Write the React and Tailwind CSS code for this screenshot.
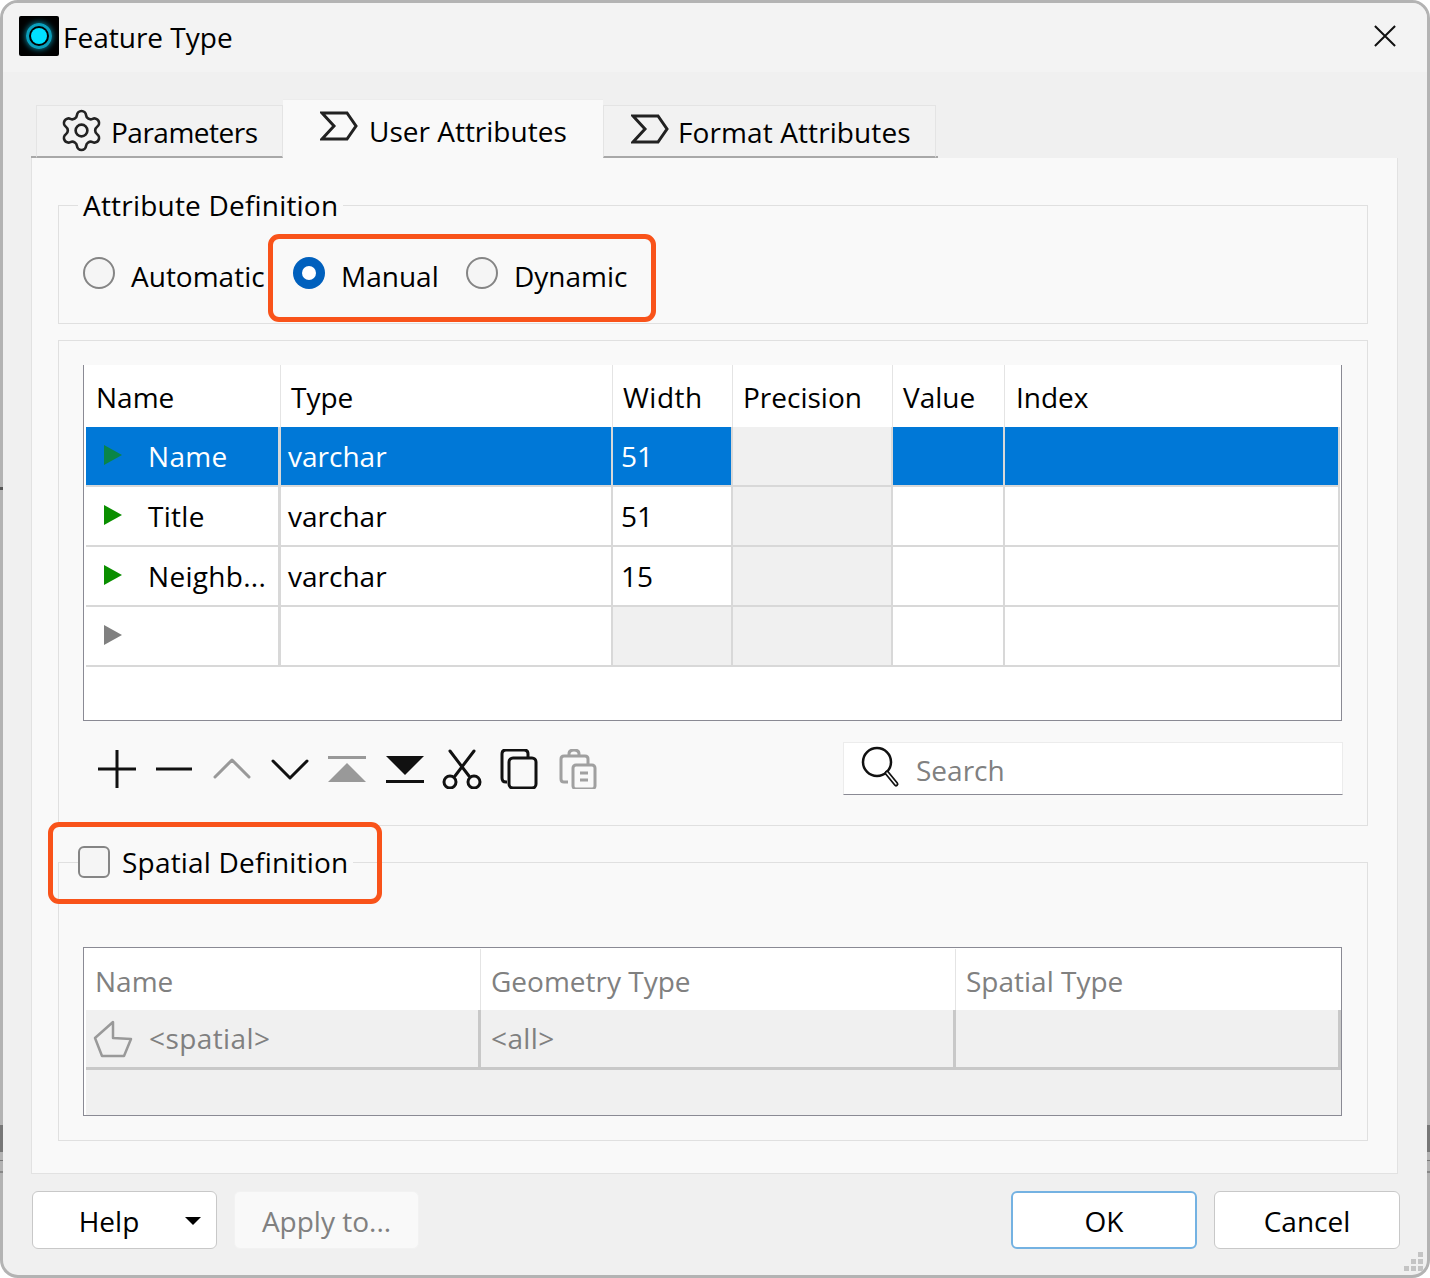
import { Settings } from 'lucide-react';

const font = { fontFamily: '"Open Sans", "Noto Sans", sans-serif' };

function AttrIcon({ className }) {
    return (
        <svg viewBox="0 0 38 30" className={className} fill="none">
            <path d="M2 2 H27 L36 15 L27 28 H2 L14 15 Z" stroke="#222" strokeWidth="3" strokeLinejoin="miter" />
        </svg>
    );
}

function Arrow({ color = '#0a8f00' }) {
    return (
        <svg viewBox="0 0 18 20" className="w-[18px] h-[20px] shrink-0 -mt-[2px]">
            <path d="M0 0 L18 10 L0 20 Z" fill={color} />
        </svg>
    );
}

function Legend({ children, className }) {
    return <div className={`absolute top-[-17px] left-[19px] bg-[#f9f9f9] h-[32px] flex items-center ${className ?? ''}`}>{children}</div>;
}

const attrRows = [
    { name: 'Name', type: 'varchar', width: '51', selected: true },
    { name: 'Title', type: 'varchar', width: '51' },
    { name: 'Neighb...', type: 'varchar', width: '15' },
    { name: '', type: '', width: '', empty: true },
];

function HeaderCell({ w, line, children, pl = 'pl-[11px]' }) {
    return (
        <div className={`${w} shrink-0 flex items-center pt-[2px] ${pl} ${line ? 'border-r border-[#e4e4e4]' : ''}`}>
            {children}
        </div>
    );
}

function AttrTable() {
    return (
        <div className="h-[356px] border-l border-r border-b border-[#8a8a94] bg-white pl-[2px] text-[28px] leading-none">
            <div className="flex h-[62px]">
                <HeaderCell w="w-[195px]" line pl="pl-[10px]">Name</HeaderCell>
                <HeaderCell w="w-[332px]" line pl="pl-[10px]">Type</HeaderCell>
                <HeaderCell w="w-[120px]" line pl="pl-[10px]"><span className="tracking-[0.5px]">Width</span></HeaderCell>
                <HeaderCell w="w-[160px]" line pl="pl-[10px]">Precision</HeaderCell>
                <HeaderCell w="w-[112px]" line pl="pl-[10px]">Value</HeaderCell>
                <HeaderCell w="w-[335px]" pl="pl-[11px]">Index</HeaderCell>
            </div>
            {attrRows.map((r) => {
                const bg = r.selected ? 'bg-[#0078d7] text-white' : 'bg-white text-black';
                return (
                    <div key={r.name || 'new'} className="flex h-[60px] border-b-2 border-[#d8d8d8] w-[1254px]">
                        <div className={`w-[192px] flex items-center pl-[18px] gap-[26px] ${bg}`}>
                            <Arrow color={r.empty ? '#808080' : r.selected ? '#0a8548' : '#0a8f00'} />
                            <span className="whitespace-nowrap tracking-[0.3px]">{r.name}</span>
                        </div>
                        <div className="w-[3px] bg-[#d8d8d8]" />
                        <div className={`w-[330px] flex items-center pl-[7px] ${bg}`}>{r.type}</div>
                        <div className="w-[2px] bg-[#d8d8d8]" />
                        <div className={`w-[118px] flex items-center pl-[8px] ${r.empty ? 'bg-[#f0f0f0]' : bg}`}>{r.width}</div>
                        <div className="w-[2px] bg-[#d8d8d8]" />
                        <div className="w-[158px] bg-[#f0f0f0]" />
                        <div className="w-[2px] bg-[#d8d8d8]" />
                        <div className={`w-[110px] ${bg}`} />
                        <div className="w-[2px] bg-[#d8d8d8]" />
                        <div className={`w-[333px] ${bg}`} />
                        <div className="w-[2px] bg-[#d8d8d8]" />
                    </div>
                );
            })}
        </div>
    );
}

function Tool({ children }) {
    return (
        <div className="w-[57.6px] flex justify-center shrink-0">
            <svg viewBox="0 0 40 40" className="w-[40px] h-[40px]" fill="none" strokeWidth="3">
                {children}
            </svg>
        </div>
    );
}

function Toolbar() {
    return (
        <div className="flex mt-[1px]">
            <Tool><path d="M20 1 V39 M1 20 H39" stroke="#111" /></Tool>
            <Tool><path d="M2 20 H38" stroke="#111" /></Tool>
            <Tool><path d="M3 28 L20 11 L37 28" stroke="#999" strokeLinejoin="round" strokeLinecap="round" /></Tool>
            <Tool><path d="M3 12 L20 29 L37 12" stroke="#111" strokeLinejoin="round" strokeLinecap="round" /></Tool>
            <Tool>
                <path d="M1 8.5 H39" stroke="#999" />
                <path d="M1 33 L20 14 L39 33 Z" fill="#999" />
            </Tool>
            <Tool>
                <path d="M1 32.5 H39" stroke="#111" />
                <path d="M1 7 H39 L20 26 Z" fill="#111" />
            </Tool>
            <Tool>
                <path d="M8 2 L27 27 M32 2 L13 27" stroke="#111" strokeLinecap="round" />
                <circle cx="8" cy="33" r="6" stroke="#111" />
                <circle cx="32" cy="33" r="6" stroke="#111" />
            </Tool>
            <Tool>
                <path d="M7 33 H6 Q2 33 2 29 V5 Q2 1 6 1 H24 Q28 1 28 5 V9" stroke="#111" />
                <rect x="9" y="9" width="27" height="30" rx="4" stroke="#111" />
            </Tool>
            <Tool>
                <path d="M10 33 H6 Q3 33 3 30 V10 Q3 7 6 7 H27 Q30 7 30 10 V16" stroke="#a0a0a0" />
                <path d="M11 7 V5 Q11 1 16 1 Q21 1 21 5 V7" stroke="#a0a0a0" />
                <rect x="15" y="16" width="22" height="24" rx="3" stroke="#a0a0a0" />
                <path d="M22 24 H30 M22 31 H30" stroke="#a0a0a0" />
            </Tool>
        </div>
    );
}

function SpatialTable() {
    return (
        <div className="h-[169px] border-[1.5px] border-[#8a8a94] bg-white text-[#808080] text-[28px] leading-none pt-[1px]">
            <div className="flex h-[61px]">
                <HeaderCell w="w-[397px]" line>Name</HeaderCell>
                <HeaderCell w="w-[475px]" line pl="pl-[10px]">Geometry Type</HeaderCell>
                <HeaderCell w="w-[380px]" pl="pl-[10px]">Spatial Type</HeaderCell>
            </div>
            <div className="ml-[2px] h-[105px] bg-[#f0f0f0]">
                <div className="flex h-[60px] border-b-[3px] border-[#c8c8c8]">
                    <div className="w-[395px] flex items-center pl-[7px] gap-[16px] border-r-[3px] border-[#c8c8c8]">
                        <svg viewBox="0 0 40 40" className="w-[40px] h-[40px]" fill="none" stroke="#999" strokeWidth="2.5" strokeLinejoin="round">
                            <path d="M20 3 L20 19 L38 20 L31 37 L9 37 L2 19 Z" />
                        </svg>
                        <span className="tracking-[0.4px] -mt-[2px]">&lt;spatial&gt;</span>
                    </div>
                    <div className="w-[475px] flex items-center pl-[10px] tracking-[0.4px] border-r-[3px] border-[#c8c8c8]">
                        <span className="-mt-[2px]">&lt;all&gt;</span>
                    </div>
                    <div className="w-[385px] border-r-[3px] border-[#c8c8c8]" />
                </div>
            </div>
        </div>
    );
}

function Radio({ checked }) {
    if (checked) {
        return (
            <div className="w-[32px] h-[32px] rounded-full bg-[#0060bd] flex items-center justify-center shrink-0">
                <div className="w-[14px] h-[14px] rounded-full bg-white" />
            </div>
        );
    }
    return <div className="w-[32px] h-[32px] rounded-full border-2 border-[#858585] bg-[#f5f5f5] shrink-0" />;
}

function Button({ className, children }) {
    return (
        <div className={`h-[58px] rounded-[6px] border flex items-center justify-center text-[28px] pt-[2px] ${className}`}>
            {children}
        </div>
    );
}

export default function App() {
    return (
        <div className="relative w-[1430px] h-[1278px] bg-white text-black" style={font}>
            <div className="relative w-[1430px] h-[1278px] rounded-[18px] border-[3px] border-[#b3b3b3] bg-[#f0f0f0] overflow-hidden flex flex-col">
                <div className="h-[69px] bg-[#f3f3f3] flex items-center pl-[16px] shrink-0">
                    <div className="w-[40px] h-[40px] -mt-[4px] bg-black rounded-[2px] flex items-center justify-center shrink-0">
                        <div className="w-[26px] h-[26px] rounded-full border-[3px] border-[#0a9fbc] flex items-center justify-center shadow-[0_0_6px_#0a9fbc]">
                            <div className="w-[16px] h-[16px] rounded-full bg-[#00e1ff]" />
                        </div>
                    </div>
                    <span className="ml-[4px] -mt-[2px] text-[28px] leading-none">Feature Type</span>
                    <svg viewBox="0 0 24 24" className="ml-auto mr-[31px] -mt-[4px] w-[22px] h-[22px]" fill="none" stroke="#111" strokeWidth="2.2">
                        <path d="M1 1 L23 23 M23 1 L1 23" />
                    </svg>
                </div>

                <div className="ml-[28px] w-[1367px] shrink-0">
                    <div className="flex items-end h-[86px] text-[28px] leading-none">
                        <div className="w-[5px] border-b-2 border-[#a8a8a8]" />
                        <div className="w-[247px] h-[53px] flex items-center pl-[21px] gap-[6px] border border-b-2 border-[#e4e4e4] border-b-[#a8a8a8] bg-[#f2f2f2]">
                            <Settings className="w-[47px] h-[47px] shrink-0 -mt-[2px]" strokeWidth={1.35} color="#222" />
                            <span className="tracking-[-0.5px] mt-[2px]">Parameters</span>
                        </div>
                        <div className="w-[320px] h-[61px] -mb-[2px] flex items-center pl-[37px] pb-[2px] gap-[11px] bg-[#f9f9f9] border-t border-[#ececec]">
                            <AttrIcon className="w-[38px] h-[30px] shrink-0 -mt-[6px]" />
                            <span className="mt-[4px]">User Attributes</span>
                        </div>
                        <div className="w-[333px] h-[53px] flex items-center pl-[27px] gap-[9px] border border-b-2 border-[#e4e4e4] border-b-[#a8a8a8] bg-[#f2f2f2]">
                            <AttrIcon className="w-[38px] h-[30px] shrink-0 -mt-[4px]" />
                            <span className="mt-[2px] tracking-[0.1px]">Format Attributes</span>
                        </div>
                        <div className="w-[2px] border-b-2 border-[#a8a8a8]" />
                    </div>

                    <div className="h-[1016px] bg-[#f9f9f9] border-l border-r border-b border-[#e2e2e2] pl-[26px] pr-[29px] pt-[47px] text-[28px] leading-none">
                        <div className="relative h-[119px] border border-[#e0e0e0]">
                            <Legend className="px-[5px] tracking-[0.2px]">Attribute Definition</Legend>
                            <div className="flex items-center h-full pl-[24px] pt-[16px]">
                                <Radio />
                                <span className="ml-[16px] w-[146px] whitespace-nowrap mt-[6px]">Automatic</span>
                                <div className="ml-[16px]"><Radio checked /></div>
                                <span className="ml-[16px] w-[125px] mt-[6px]">Manual</span>
                                <Radio />
                                <span className="ml-[16px] mt-[6px]">Dynamic</span>
                            </div>
                        </div>

                        <div className="mt-[16px] h-[486px] border border-[#e0e0e0] pl-[24px] pr-[25px] pt-[24px]">
                            <AttrTable />
                            <div className="flex items-center justify-between mt-[21px]">
                                <div className="pl-[5px]"><Toolbar /></div>
                                <div className="w-[500px] -mr-[1px] h-[53px] bg-white border border-[#ececec] border-b-[#8a8a94] flex items-center pl-[17px] gap-[15px] text-[#808080]">
                                    <svg viewBox="0 0 40 42" className="w-[40px] h-[42px] shrink-0 -mt-[3px]" fill="none" stroke="#111" strokeWidth="2.5">
                                        <circle cx="16" cy="16" r="14" />
                                        <path d="M26 27 L35 38" strokeWidth="5" strokeLinecap="round" />
                                        <path d="M26 27 L35 38" strokeWidth="1.5" stroke="#fff" strokeLinecap="round" />
                                    </svg>
                                    <span className="mt-[3px]">Search</span>
                                </div>
                            </div>
                        </div>

                        <div className="relative mt-[36px] h-[279px] border border-[#e0e0e0] pl-[24px] pr-[25px] pt-[84px]">
                            <Legend className="pr-[5px] gap-[12px]">
                                <div className="w-[32px] h-[32px] rounded-[6px] border-2 border-[#858585] bg-[#f5f5f5]" />
                                <span className="tracking-[0.2px]">Spatial Definition</span>
                            </Legend>
                            <SpatialTable />
                        </div>
                    </div>
                </div>

                <div className="flex-1 flex items-start pt-[17px] pl-[29px] pr-[27px] gap-[17px]">
                    <Button className="w-[185px] bg-white border-[#c8c8c8] relative">
                        <span className="mr-[31px]">Help</span>
                        <svg viewBox="0 0 16 8" className="absolute right-[15px] top-[25px] w-[16px] h-[8px]">
                            <path d="M0 0 H16 L8 8 Z" fill="#000" />
                        </svg>
                    </Button>
                    <Button className="w-[185px] bg-[#f9f9f9] border-[#f2f2f2] text-[#808080]">Apply to...</Button>
                    <div className="flex-1" />
                    <Button className="w-[186px] bg-white border-2 border-[#74b2e2]">OK</Button>
                    <Button className="w-[186px] bg-white border-[#c8c8c8]">Cancel</Button>
                </div>

                {/* orange annotation boxes drawn on top of the dialog */}
                <div className="absolute left-[265px] top-[231px] w-[388px] h-[88px] rounded-[11px] border-[5px] border-[#f9531a]" />
                <div className="absolute left-[45px] top-[819px] w-[334px] h-[82px] rounded-[11px] border-[5px] border-[#f9531a]" />

                <svg viewBox="0 0 24 24" className="absolute right-[1px] bottom-[1px] w-[24px] h-[24px]" fill="#c4c4c4">
                    <rect x="16" y="2" width="5" height="5" />
                    <rect x="9" y="9" width="5" height="5" />
                    <rect x="16" y="9" width="5" height="5" />
                    <rect x="2" y="16" width="5" height="5" />
                    <rect x="9" y="16" width="5" height="5" />
                    <rect x="16" y="16" width="5" height="5" />
                </svg>
            </div>

            {/* bits of the desktop behind showing through the window shadow */}
            <div className="absolute left-0 top-[487px] w-[3px] h-[3px] bg-[#555]" />
            <div className="absolute left-0 top-[1125px] w-[3px] h-[27px] bg-[#777]" />
            <div className="absolute left-0 top-[1160px] w-[3px] h-[1px] bg-[#777]" />
            <div className="absolute left-0 top-[1171px] w-[3px] h-[2px] bg-[#888]" />
            <div className="absolute right-0 top-[1125px] w-[3px] h-[27px] bg-[#777]" />
            <div className="absolute right-0 top-[1160px] w-[3px] h-[1px] bg-[#777]" />
            <div className="absolute right-0 top-[1171px] w-[3px] h-[2px] bg-[#888]" />
        </div>
    );
}
